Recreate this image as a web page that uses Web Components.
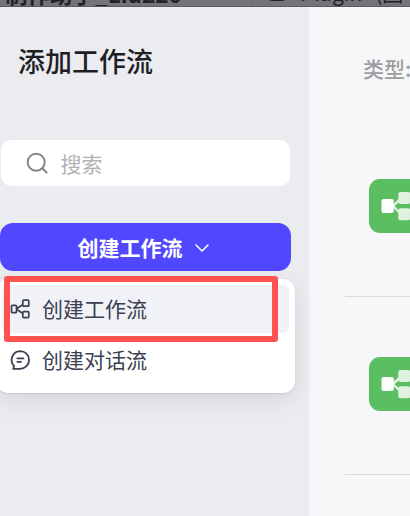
<!DOCTYPE html>
<html lang="zh-CN">
<head>
<meta charset="utf-8">
<title>添加工作流</title>
<style>
    html, body {
        margin: 0;
        height: 100%;
        overflow: hidden;
    }
    body {
        font-family: "Noto Sans CJK SC", "Noto Sans", sans-serif;
        font-size: 21px;
        color: #1d1f25;
    }
</style>
</head>
<body>
<workflow-dialog>
    <page-strip slot="strip"></page-strip>
    <side-title slot="side">添加工作流</side-title>
    <search-box slot="side" placeholder="搜索"></search-box>
    <create-dropdown slot="side" label="创建工作流">
        <menu-item icon="flow" active>创建工作流</menu-item>
        <menu-item icon="chat">创建对话流</menu-item>
    </create-dropdown>
    <filter-label slot="main">类型:</filter-label>
    <workflow-row slot="main"></workflow-row>
    <workflow-row slot="main"></workflow-row>
</workflow-dialog>

<script>
const icons = {
    flow: `<svg width="20" height="20" viewBox="0 0 20 20" fill="none" stroke="currentColor" stroke-width="1.7">
        <rect x="1.5" y="6.3" width="5" height="7.4" rx="1"/>
        <rect x="12.8" y="1.2" width="6" height="6" rx="1"/>
        <rect x="12.8" y="12.6" width="6" height="6" rx="1"/>
        <path d="M6.5 9.8 12.6 5.7M6.5 10.2 12.6 14.2"/>
    </svg>`,
    chat: `<svg width="20" height="20" viewBox="0 0 20 20" fill="none" stroke="currentColor" stroke-width="1.8" stroke-linecap="round" stroke-linejoin="round">
        <path d="M10.2 1.1a8.8 8.8 0 1 1 0 17.7H3.2l.9-2.8A8.8 8.8 0 0 1 10.2 1.1Z"/>
        <path d="M7.4 8.4h6M7.4 11.8h3.6"/>
    </svg>`
};

class WorkflowDialog extends HTMLElement {
    constructor() {
        super();
        this.attachShadow({ mode: 'open' }).innerHTML = `
            <style>
                :host {
                    display: flex;
                    flex-direction: column;
                    height: 100vh;
                }
                .columns {
                    display: flex;
                    flex: 1;
                    min-height: 0;
                }
                .side {
                    width: 309px;
                    flex: none;
                    background: #ebecf0;
                    position: relative;
                    z-index: 1;
                }
                .main {
                    flex: 1;
                    min-width: 0;
                    background: #f7f7fa;
                    overflow: hidden;
                }
            </style>
            <slot name="strip"></slot>
            <div class="columns">
                <div class="side"><slot name="side"></slot></div>
                <div class="main"><slot name="main"></slot></div>
            </div>
        `;
    }
}

// bottom edge of the dimmed page behind the dialog
class PageStrip extends HTMLElement {
    constructor() {
        super();
        this.attachShadow({ mode: 'open' }).innerHTML = `
            <style>
                :host {
                    display: flex;
                    align-items: flex-end;
                    box-sizing: border-box;
                    height: 7px;
                    flex: none;
                    overflow: hidden;
                    background: #747377;
                    border-bottom: 1px solid #5c5b5f;
                    color: #22222a;
                    white-space: nowrap;
                    line-height: 24px;
                }
                .name {
                    font-size: 22.5px;
                    font-weight: 700;
                    width: 252px;
                    flex: none;
                    margin-bottom: 1px;
                    text-indent: 5px;
                }
                .tab {
                    display: flex;
                    align-items: flex-end;
                    flex: none;
                    font-size: 21px;
                    border-left: 1px solid #68676b;
                    padding-left: 16px;
                    gap: 15px;
                }
                .tab i {
                    width: 16px;
                    height: 14px;
                    border-radius: 3px;
                    background: #22222a;
                    margin-bottom: 5px;
                }
                .tab span {
                    margin-bottom: 2px;
                    word-spacing: 8px;
                }
            </style>
            <div class="name">制作助手_Liu220</div>
            <div class="tab"><i></i><span>Plugin (图</span></div>
        `;
    }
}

class SideTitle extends HTMLElement {
    constructor() {
        super();
        this.attachShadow({ mode: 'open' }).innerHTML = `
            <style>
                :host {
                    display: block;
                    padding: 34px 0 1px 18px;
                    font-size: 27px;
                    font-weight: 500;
                    line-height: 40px;
                }
            </style>
            <slot></slot>
        `;
    }
}

class SearchBox extends HTMLElement {
    constructor() {
        super();
        this.attachShadow({ mode: 'open' });
    }

    connectedCallback() {
        this.shadowRoot.innerHTML = `
            <style>
                :host {
                    display: flex;
                    align-items: center;
                    box-sizing: border-box;
                    gap: 12.5px;
                    width: 289px;
                    height: 46px;
                    margin: 58px 0 0 1px;
                    padding-left: 25px;
                    border-radius: 10px;
                    background: #fff;
                    color: #b2b2b5;
                    font-weight: 400;
                }
                svg {
                    color: #83838a;
                }
            </style>
            <svg width="22" height="22" viewBox="0 0 22 22" fill="none" stroke="currentColor" stroke-width="1.9" stroke-linecap="round">
                <circle cx="10.2" cy="10.2" r="8.5"/>
                <path d="m16.3 16.3 4.3 4.2"/>
            </svg>
            <span>${this.getAttribute('placeholder')}</span>
        `;
    }
}

class CreateDropdown extends HTMLElement {
    constructor() {
        super();
        this.attachShadow({ mode: 'open' });
    }

    connectedCallback() {
        this.shadowRoot.innerHTML = `
            <style>
                :host {
                    display: block;
                    position: relative;
                    margin-top: 37px;
                }
                .button {
                    display: flex;
                    align-items: center;
                    justify-content: center;
                    box-sizing: border-box;
                    gap: 11px;
                    width: 291px;
                    height: 48px;
                    padding-right: 4px;
                    border-radius: 13px;
                    background: #5147ff;
                    color: #fff;
                    font-weight: 700;
                }
                .button svg {
                    margin-top: 1px;
                }
                .menu {
                    position: absolute;
                    top: 56px;
                    left: -4px;
                    box-sizing: border-box;
                    width: 299px;
                    height: 114px;
                    padding: 6px;
                    display: flex;
                    flex-direction: column;
                    gap: 3px;
                    border-radius: 12px;
                    background: #fff;
                    box-shadow: 0 6px 24px rgba(0, 0, 0, 0.1), 0 1px 2px rgba(0, 0, 0, 0.09);
                }
                .highlight {
                    position: absolute;
                    top: 53px;
                    left: 4px;
                    box-sizing: border-box;
                    width: 274px;
                    height: 66px;
                    border: 6px solid #fc5250;
                    border-radius: 3px;
                }
            </style>
            <div class="button">
                <span>${this.getAttribute('label')}</span>
                <svg width="16" height="10" viewBox="0 0 16 10" fill="none" stroke="currentColor" stroke-width="1.5" stroke-linecap="round" stroke-linejoin="round">
                    <path d="m2 2 6 6 6-6"/>
                </svg>
            </div>
            <div class="menu"><slot></slot></div>
            <div class="highlight"></div>
        `;
    }
}

class MenuItem extends HTMLElement {
    constructor() {
        super();
        this.attachShadow({ mode: 'open' });
    }

    connectedCallback() {
        this.shadowRoot.innerHTML = `
            <style>
                :host {
                    display: flex;
                    align-items: center;
                    gap: 12px;
                    height: 48px;
                    flex: none;
                    padding-left: 8px;
                    border-radius: 6px;
                    color: #3b3f51;
                }
                :host([active]) {
                    background: #f1f2f7;
                }
                span {
                    padding-bottom: 2px;
                }
            </style>
            ${icons[this.getAttribute('icon')]}
            <span><slot></slot></span>
        `;
    }
}

class FilterLabel extends HTMLElement {
    constructor() {
        super();
        this.attachShadow({ mode: 'open' }).innerHTML = `
            <style>
                :host {
                    display: block;
                    box-sizing: border-box;
                    padding: 45px 0 0 54px;
                    height: 112px;
                    line-height: 32px;
                    font-weight: 500;
                    color: #9d9ea1;
                    white-space: nowrap;
                }
            </style>
            <slot></slot>
        `;
    }
}

class WorkflowRow extends HTMLElement {
    constructor() {
        super();
        this.attachShadow({ mode: 'open' }).innerHTML = `
            <style>
                :host {
                    display: block;
                    box-sizing: border-box;
                    height: 178px;
                    margin-left: 36px;
                    padding: 60px 0 0 24px;
                    border-bottom: 1px solid #dadade;
                }
                .logo {
                    width: 54px;
                    height: 54px;
                    border-radius: 11px;
                    background: #5bbf62;
                }
                svg {
                    display: block;
                }
            </style>
            <div class="logo">
                <svg width="54" height="54" viewBox="0 0 54 54" fill="#fff">
                    <g opacity="0.8">
                        <path d="M31 20.5 24 27l7 7" fill="none" stroke="#fff" stroke-width="2.4"/>
                        <rect x="29.3" y="13" width="12" height="12" rx="2"/>
                        <rect x="29.3" y="29.3" width="12" height="12" rx="2"/>
                    </g>
                    <rect x="12.5" y="20" width="12.3" height="14" rx="2"/>
                </svg>
            </div>
        `;
    }
}

customElements.define('workflow-dialog', WorkflowDialog);
customElements.define('page-strip', PageStrip);
customElements.define('side-title', SideTitle);
customElements.define('search-box', SearchBox);
customElements.define('create-dropdown', CreateDropdown);
customElements.define('menu-item', MenuItem);
customElements.define('filter-label', FilterLabel);
customElements.define('workflow-row', WorkflowRow);
</script>
</body>
</html>
